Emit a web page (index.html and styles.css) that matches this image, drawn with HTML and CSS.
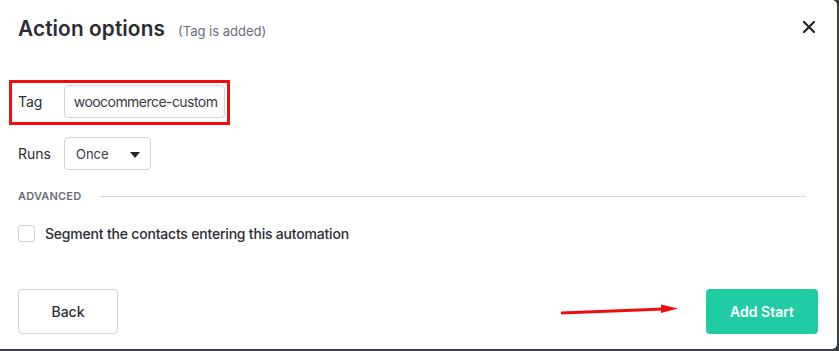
FILE: index.html
```html
<!DOCTYPE html>
<html>
<head>
<meta charset="utf-8">
<link rel="stylesheet" href="styles.css">
</head>
<body>
<div class="modal">
  <div class="header">
    <h1 class="title">Action options</h1>
    <span class="subtitle">(Tag is added)</span>
    <svg class="close" width="12" height="12" viewBox="0 0 12 12"><path d="M1 1L11 11M11 1L1 11" stroke="#23252b" stroke-width="2.2" stroke-linecap="square"/></svg>
  </div>
  <div class="row tag-row">
    <label class="label">Tag</label>
    <div class="input">woocommerce-custom</div>
  </div>
  <div class="row runs-row">
    <label class="label">Runs</label>
    <div class="select">
      <span>Once</span>
      <svg class="caret" width="10" height="6" viewBox="0 0 10 6"><path d="M0 0H10L5 6Z" fill="#23252b"/></svg>
    </div>
  </div>
  <div class="advanced">
    <span class="adv-label">ADVANCED</span>
    <span class="adv-line"></span>
  </div>
  <div class="check-row">
    <span class="checkbox"></span>
    <span class="check-text">Segment the contacts entering this automation</span>
  </div>
  <div class="footer">
    <button class="btn btn-back">Back</button>
    <button class="btn btn-primary">Add Start</button>
  </div>
  <svg class="arrow" width="130" height="20" viewBox="0 0 130 20">
    <path d="M3 12.5 L106 8.5 L106 11.5 L3 15.5 Z" fill="#f20d0d"/>
    <path d="M103 5.5 L120 9.5 L103 14 Z" fill="#f20d0d"/>
  </svg>
</div>
</body>
</html>
```

FILE: styles.css
```css
html, body {
  margin: 0;
  padding: 0;
}
body {
  background: #3b3e45;
  width: 839px;
  height: 351px;
  overflow: hidden;
  font-family: "Inter", "Noto Sans", sans-serif;
  color: #2b2d33;
}
.modal {
  position: relative;
  box-sizing: border-box;
  width: 837px;
  height: 349px;
  background: #fff;
  border-radius: 0 5px 5px 0;
  padding: 15px 18px 0 18px;
}
.header {
  display: flex;
  align-items: baseline;
  height: 28px;
}
.title {
  margin: 0;
  font-size: 20.8px;
  font-weight: 600;
  line-height: 28px;
  color: #2b2d33;
  letter-spacing: 0.1px;
}
.subtitle {
  margin-left: 13px;
  font-size: 13px;
  color: #6b6e78;
}
.close {
  margin-left: auto;
  margin-right: 4px;
  align-self: center;
  position: relative;
  top: -2px;
}
.row {
  display: flex;
  align-items: center;
}
.label {
  font-size: 14px;
  color: #2b2d33;
  width: 46px;
}
.tag-row {
  margin-top: 37px;
  margin-left: -9px;
  width: 221px;
  box-sizing: border-box;
  border: 3px solid #f20d0d;
  padding: 2px 2px 4px 6px;
}
.input {
  box-sizing: border-box;
  width: 162px;
  height: 33px;
  border: 1px solid #d3d5dd;
  border-radius: 4px;
  padding: 0 0 0 9px;
  font-size: 14px;
  line-height: 31px;
  color: #3a3c42;
  white-space: nowrap;
  overflow: hidden;
  letter-spacing: -0.55px;
}
.runs-row {
  margin-top: 12px;
}
.select {
  box-sizing: border-box;
  width: 87px;
  height: 33px;
  border: 1px solid #d3d5dd;
  border-radius: 4px;
  display: flex;
  align-items: center;
  padding: 0 10px 0 11px;
  font-size: 13px;
  color: #3a3c42;
}
.caret {
  margin-left: auto;
  position: relative;
  top: 1px;
}
.advanced {
  display: flex;
  align-items: center;
  height: 20px;
  margin-top: 16px;
}
.adv-label {
  font-size: 11px;
  font-weight: 600;
  color: #6b6e78;
  letter-spacing: 0.2px;
}
.adv-line {
  flex: 1;
  height: 1px;
  background: #d6d8e1;
  margin-left: 20px;
  margin-right: 13px;
}
.check-row {
  display: flex;
  align-items: center;
  height: 21px;
  margin-top: 17px;
}
.checkbox {
  box-sizing: border-box;
  width: 17px;
  height: 17px;
  border: 1px solid #cfd1d8;
  border-radius: 3px;
  margin-right: 10px;
}
.check-text {
  font-size: 14px;
  font-weight: 500;
  color: #2b2d33;
  letter-spacing: -0.2px;
}
.footer {
  display: flex;
  justify-content: space-between;
  margin-top: 45px;
  padding-right: 1px;
}
.btn {
  box-sizing: border-box;
  height: 45px;
  border-radius: 4px;
  font-family: inherit;
  font-size: 14px;
  font-weight: 500;
  cursor: pointer;
}
.btn-back {
  width: 100px;
  background: #fff;
  border: 1px solid #d3d5dd;
  color: #2b2d33;
}
.btn-primary {
  width: 112px;
  background: #1fcca4;
  border: none;
  color: #fff;
  font-weight: 600;
}
.arrow {
  position: absolute;
  left: 558px;
  top: 299px;
}
```
